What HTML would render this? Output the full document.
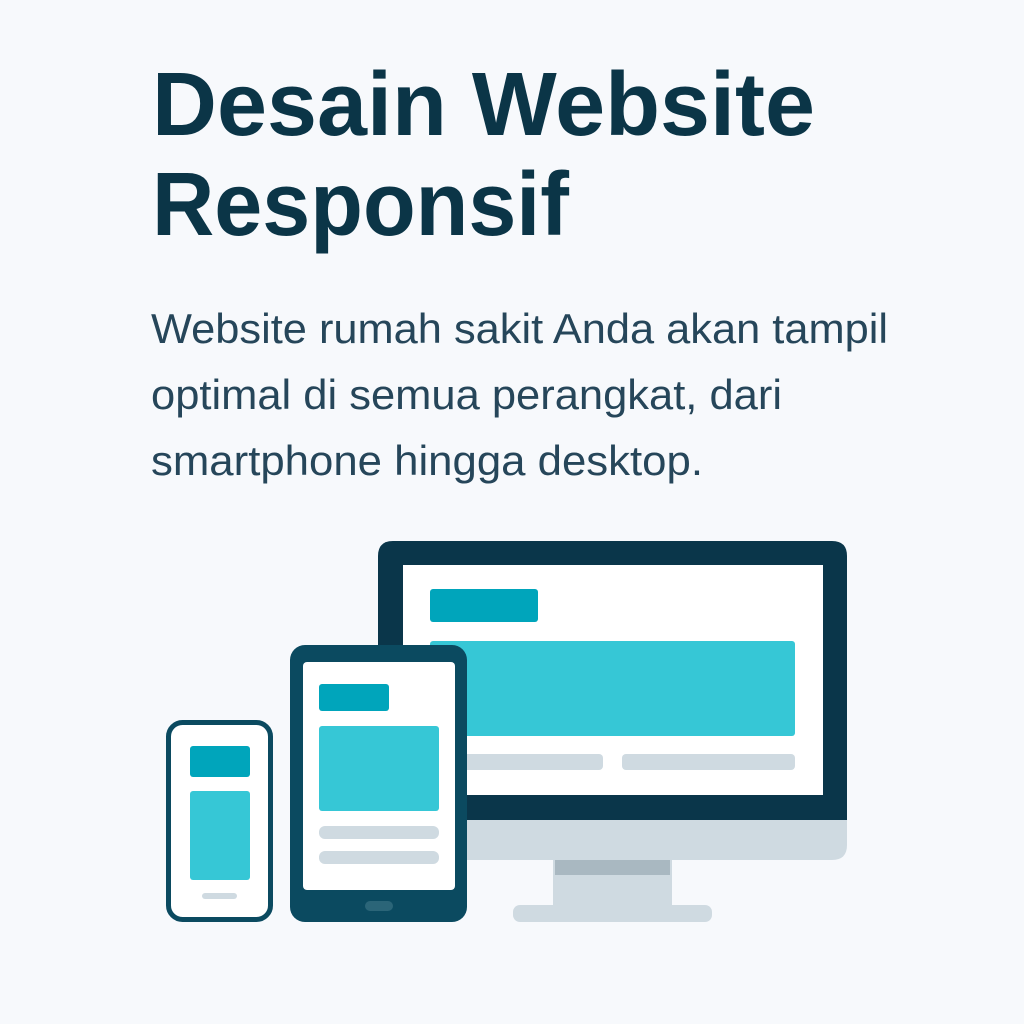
<!DOCTYPE html>
<html><head><meta charset="utf-8"><style>
html,body{margin:0;padding:0;background:#f7f9fc;}
svg{display:block}
</style></head><body>
<svg width="1024" height="1024" viewBox="0 0 1024 1024" xmlns="http://www.w3.org/2000/svg">
<rect width="1024" height="1024" fill="#f7f9fc"/>
<g font-family="Liberation Sans, sans-serif">
<text x="152" y="135" font-size="90" font-weight="bold" fill="#0b3547" textLength="663" lengthAdjust="spacingAndGlyphs">Desain Website</text>
<text x="152" y="235" font-size="90" font-weight="bold" fill="#0b3547" textLength="417" lengthAdjust="spacingAndGlyphs">Responsif</text>
<text x="151" y="343" font-size="42" fill="#26465a" textLength="737" lengthAdjust="spacingAndGlyphs">Website rumah sakit Anda akan tampil</text>
<text x="151" y="409" font-size="42" fill="#26465a" textLength="631" lengthAdjust="spacingAndGlyphs">optimal di semua perangkat, dari</text>
<text x="151" y="475" font-size="42" fill="#26465a" textLength="552" lengthAdjust="spacingAndGlyphs">smartphone hingga desktop.</text>
</g>
<!-- monitor -->
<rect x="553" y="855" width="119" height="55" fill="#cfdae1"/>
<rect x="555" y="858" width="115" height="17" fill="#a9b8c1"/>
<rect x="513" y="905" width="199" height="17" rx="7" fill="#cfdae1"/>
<path d="M378 820 H847 V845 Q847 860 832 860 H393 Q378 860 378 845 Z" fill="#cfdae1"/>
<path d="M378 820 V556 Q378 541 393 541 H832 Q847 541 847 556 V820 Z" fill="#0a364a"/>
<rect x="403" y="565" width="420" height="230" fill="#ffffff"/>
<rect x="430" y="589" width="108" height="33" rx="3" fill="#00a5bb"/>
<rect x="430" y="641" width="365" height="95" rx="3" fill="#36c7d6"/>
<rect x="430" y="754" width="173" height="16" rx="4" fill="#cfdae1"/>
<rect x="622" y="754" width="173" height="16" rx="4" fill="#cfdae1"/>
<!-- tablet -->
<rect x="290" y="645" width="177" height="277" rx="15" fill="#0b4a60"/>
<rect x="303" y="662" width="152" height="228" rx="4" fill="#ffffff"/>
<rect x="319" y="684" width="70" height="27" rx="3" fill="#00a5bb"/>
<rect x="319" y="726" width="120" height="85" rx="3" fill="#36c7d6"/>
<rect x="319" y="826" width="120" height="13" rx="6" fill="#cfdae1"/>
<rect x="319" y="851" width="120" height="13" rx="6" fill="#cfdae1"/>
<rect x="365" y="901" width="28" height="10" rx="5" fill="#2b6578"/>
<!-- phone -->
<rect x="168.5" y="722.5" width="102" height="197" rx="14" fill="#ffffff" stroke="#0b4a60" stroke-width="5"/>
<rect x="190" y="746" width="60" height="31" rx="3" fill="#00a5bb"/>
<rect x="190" y="791" width="60" height="89" rx="3" fill="#36c7d6"/>
<rect x="202" y="893" width="35" height="6" rx="3" fill="#cfdae1"/>
</svg>
</body></html>
